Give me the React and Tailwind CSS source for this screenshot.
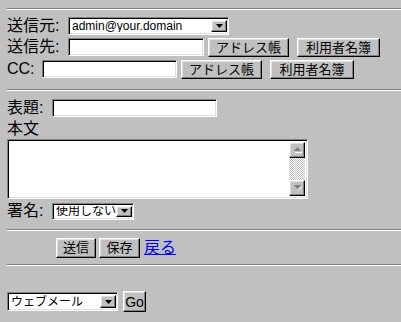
import React from "react";

const font = "font-['Liberation_Sans','Noto_Sans_CJK_JP',sans-serif]";
const inset =
  "bg-white border border-t-[#808080] border-l-[#808080] border-b-white border-r-white shadow-[inset_1px_1px_0_#000,inset_-1px_-1px_0_#dfdfdf]";
const outset =
  "bg-[#c0c0c0] border border-t-white border-l-white border-b-black border-r-black shadow-[inset_-1px_-1px_0_#808080,inset_1px_1px_0_#dfdfdf]";

function Rule({ className = "" }) {
  return <div className={"h-[2px] border-t border-t-[#808080] border-b border-b-white " + className} />;
}

function Arrow() {
  return (
    <svg width="7" height="4" viewBox="0 0 7 4">
      <polygon points="0,0 7,0 3.5,4" fill="#000" />
    </svg>
  );
}

function Select({ value, className = "" }) {
  return (
    <div className={"flex items-stretch px-[1px] py-[2px] " + inset + " " + className}>
      <span className="flex-1 flex items-center pl-[2px] text-[12px] leading-none text-black whitespace-nowrap overflow-hidden">{value}</span>
      <div className={"w-[16px] flex items-center justify-center " + outset}>
        <Arrow />
      </div>
    </div>
  );
}

function Button({ children, className = "" }) {
  return (
    <button className={"flex items-center justify-center text-[13px] leading-none text-black " + outset + " " + className}>
      {children}
    </button>
  );
}

function Input({ className = "" }) {
  return <div className={inset + " " + className} />;
}

export default function App() {
  const [text] = React.useState("");
  return (
    <div className={"w-[401px] h-[322px] overflow-hidden bg-[#c0c0c0] pl-[7px] pt-[8px] text-black " + font}>
      <Rule />

      <div className="flex items-center mt-[6px] h-[19px]">
        <span className="text-[16px] leading-none w-[61px]">送信元:</span>
        <Select value="admin@your.domain" className="w-[161px] h-[18px]" />
      </div>

      <div className="flex items-center mt-[2px] h-[20px]">
        <span className="text-[16px] leading-none w-[61px]">送信先:</span>
        <Input className="w-[136px] h-[18px]" />
        <Button className="ml-[4px] w-[81px] h-[19px]">アドレス帳</Button>
        <Button className="ml-[8px] w-[83px] h-[19px]">利用者名簿</Button>
      </div>

      <div className="flex items-center mt-[2px] h-[20px]">
        <span className="text-[16px] leading-none w-[35px]">CC:</span>
        <Input className="w-[135px] h-[18px]" />
        <Button className="ml-[4px] w-[81px] h-[19px]">アドレス帳</Button>
        <Button className="ml-[8px] w-[84px] h-[19px]">利用者名簿</Button>
      </div>

      <Rule className="mt-[10px]" />

      <div className="flex items-center mt-[7px] h-[19px]">
        <span className="text-[16px] leading-none w-[45px]">表題:</span>
        <Input className="w-[165px] h-[18px]" />
      </div>

      <div className="mt-[3px] h-[18px] text-[16px] leading-[18px]">本文</div>

      <div className={"flex w-[301px] h-[60px] mt-[1px] p-[2px] " + inset}>
        <div className="flex-1 text-[13px]">{text}</div>
        <div className="w-[16px] flex flex-col">
          <div className={"h-[16px] flex items-center justify-center " + outset}>
            <svg width="9" height="6" viewBox="0 0 9 6">
              <polygon points="1,4 8,4 4.5,0" fill="#808080" />
              <line x1="2" y1="5.5" x2="9" y2="5.5" stroke="#fff" />
            </svg>
          </div>
          <div className="flex-1 bg-[repeating-conic-gradient(#c0c0c0_0_25%,#ffffff_0_50%)] bg-[length:2px_2px]" />
          <div className={"h-[16px] flex items-center justify-center " + outset}>
            <svg width="9" height="6" viewBox="0 0 9 6">
              <polygon points="1,0 8,0 4.5,4" fill="#808080" />
              <line x1="5" y1="5.5" x2="9" y2="1.5" stroke="#fff" />
            </svg>
          </div>
        </div>
      </div>

      <div className="flex items-center mt-[3px] h-[18px]">
        <span className="text-[16px] leading-none w-[45px]">署名:</span>
        <Select value="使用しない" className="w-[82px] h-[17px]" />
      </div>

      <Rule className="mt-[9px]" />

      <div className="flex items-center mt-[6px] h-[21px] ml-[49px]">
        <Button className="w-[40px] h-[20px]">送信</Button>
        <Button className="ml-[3px] w-[41px] h-[20px]">保存</Button>
        <a href="#" className="ml-[4px] text-[16px] leading-none text-[#0000ff] underline">戻る</a>
      </div>

      <Rule className="mt-[6px]" />

      <div className="flex items-center mt-[25px] h-[21px]">
        <Select value="ウェブメール" className="w-[111px] h-[19px]" />
        <Button className="ml-[5px] w-[23px] h-[21px] text-[14px]">Go</Button>
      </div>
    </div>
  );
}
